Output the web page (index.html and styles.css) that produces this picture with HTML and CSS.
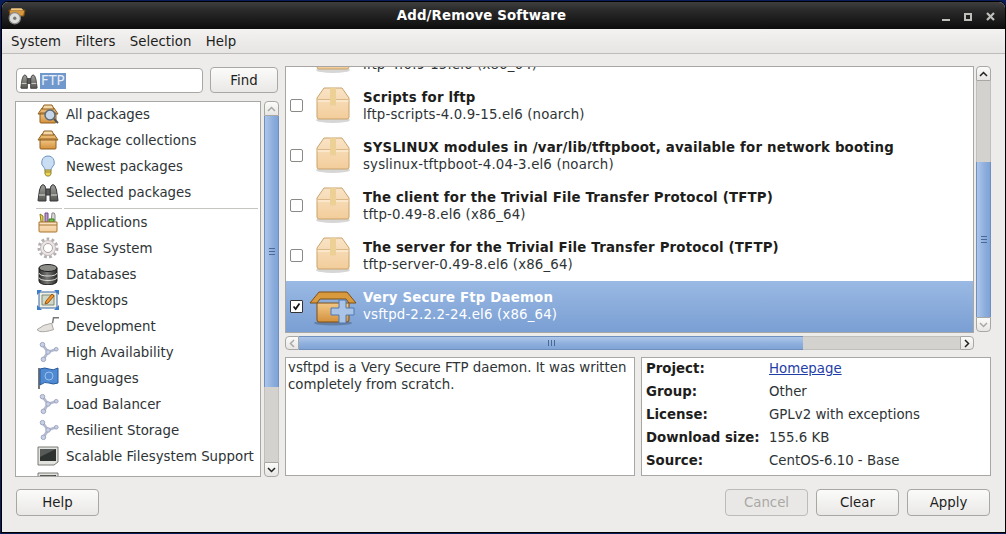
FILE: index.html
```html
<!DOCTYPE html>
<html lang="en">
<head>
<meta charset="utf-8">
<title>Add/Remove Software</title>
<link rel="stylesheet" href="styles.css">
</head>
<body>
<svg class="defs" width="0" height="0" aria-hidden="true">
  <defs>
    <linearGradient id="gBox" x1="0" y1="0" x2="0" y2="1"><stop offset="0" stop-color="#f9e3c6"/><stop offset="1" stop-color="#f3cd9a"/></linearGradient>
    <linearGradient id="gOrange" x1="0" y1="0" x2="0" y2="1"><stop offset="0" stop-color="#f2c988"/><stop offset="1" stop-color="#d4913c"/></linearGradient>
    <linearGradient id="gGrey" x1="0" y1="0" x2="0" y2="1"><stop offset="0" stop-color="#a3a39f"/><stop offset="1" stop-color="#55554f"/></linearGradient>
    <linearGradient id="gDb" x1="0" y1="0" x2="1" y2="0"><stop offset="0" stop-color="#2f2f2f"/><stop offset=".45" stop-color="#7a7a78"/><stop offset="1" stop-color="#2a2a2a"/></linearGradient>
    <symbol id="pkg" viewBox="0 0 36 38">
      <ellipse cx="18" cy="34" rx="17" ry="3" fill="#000" opacity=".16"/>
      <path d="M9 2h18l7 10v19q0 2-2 2H4q-2 0-2-2V12z" fill="url(#gBox)" stroke="#c9a36b"/>
      <path d="M2.500 13.500h31" stroke="#d9b98a" fill="none"/>
      <path d="M2.500 15h31" stroke="#fff3e0" fill="none"/>
      <path d="M15 2h6v18l-1.500-1-1.500 1-1.500-1-1.500 1z" fill="#ecd096"/>
    </symbol>
    <symbol id="pkgadd" viewBox="0 0 48 38">
      <ellipse cx="24" cy="35" rx="19" ry="2.500" fill="#000" opacity=".22"/>
      <path d="M1 15 10 4h28l9 11h-7l-3-4H11l-3 4z" fill="#d99a3e" stroke="#7e4f14"/>
      <path d="M8 15h32v17q0 2-2 2H10q-2 0-2-2z" fill="url(#gOrange)" stroke="#7e4f14"/>
      <path d="M30 12h7v8h8v7h-8v8h-7v-8h-8v-7h8z" fill="#a9c4e6" stroke="#4f79b3"/>
    </symbol>
    <symbol id="box" viewBox="0 0 22 22">
      <path d="M1 11 5 5h12l4 6" fill="#e9b66e" stroke="#8f5f1e"/>
      <path d="M7 2h8l2 4H5z" fill="#f3d8a8" stroke="#8f5f1e"/>
      <path d="M3 10h16v9q0 1-1 1H4q-1 0-1-1z" fill="url(#gOrange)" stroke="#8f5f1e"/>
      <path d="M1 11h20" stroke="#8f5f1e" fill="none"/>
    </symbol>
    <symbol id="boxlens" viewBox="0 0 22 22">
      <use href="#box"/>
      <circle cx="13" cy="12" r="5" fill="#c5d6e8" stroke="#5d6a75" stroke-width="1.500"/>
      <path d="m17 16 4 4" stroke="#4c5258" stroke-width="2" fill="none"/>
    </symbol>
    <symbol id="bulb" viewBox="0 0 22 22">
      <path d="M11 1a6.500 6.500 0 0 0-4 11.500q1 1 1 3h6q0-2 1-3A6.500 6.500 0 0 0 11 1z" fill="#c9def2" stroke="#6d94c4"/>
      <path d="M8 15h6v4l-1.500 2h-3L8 19z" fill="#ecd75c" stroke="#94812a"/>
      <path d="M8 17h6" stroke="#94812a" fill="none"/>
    </symbol>
    <symbol id="binoc" viewBox="0 0 22 22">
      <path d="M1 19.500 2.500 9 4 5q2-3 4 0l1 4v11H2q-1 0-1-.5zM21 19.500 19.500 9 18 5q-2-3-4 0l-1 4v11h7q1 0 1-.5z" fill="url(#gGrey)" stroke="#38383a"/>
      <path d="M9 8h4v6H9z" fill="#5a5a58" stroke="#38383a"/>
      <path d="M2 14h6M14 14h6" stroke="#deded9" fill="none"/>
    </symbol>
    <symbol id="apps" viewBox="0 0 22 22">
      <path d="M3 3l3 2v6H4z" fill="#e8d24f" stroke="#8f7e1e"/>
      <path d="M8 2h3v9H8z" fill="#b99ac8" stroke="#6c4a80"/>
      <path d="M15 2q3-1 3 2v7h-4z" fill="#d8d8d4" stroke="#8a8a86"/>
      <path d="M12 8h5v3h-5z" fill="#6fc24a" stroke="#3d7f22"/>
      <path d="M2 11h18v9q0 1-1 1H3q-1 0-1-1z" fill="url(#gBox)" stroke="#a8752e"/>
      <path d="M2 14h18" stroke="#a8752e" fill="none"/>
    </symbol>
    <symbol id="gear" viewBox="0 0 22 22">
      <circle cx="11" cy="11" r="8.500" fill="none" stroke="#b5b0b0" stroke-width="4" stroke-dasharray="2.600 2.200"/>
      <circle cx="11" cy="11" r="7.500" fill="#ece5e5" stroke="#c6bfc0"/>
      <circle cx="11" cy="11" r="4.500" fill="#fff" stroke="#b0a4a6"/>
    </symbol>
    <symbol id="db" viewBox="0 0 22 22">
      <path d="M2 5v13c0 5 18 5 18 0V5z" fill="url(#gDb)" stroke="#1e1e1e"/>
      <ellipse cx="11" cy="5" rx="9" ry="3.500" fill="#8d8d8a" stroke="#1e1e1e"/>
      <path d="M2 10c0 4 18 4 18 0M2 14.500c0 4 18 4 18 0" fill="none" stroke="#dcdcd8"/>
    </symbol>
    <symbol id="desk" viewBox="0 0 22 22">
      <path d="M2 3h18v16H2z" fill="#eef0e6" stroke="#35659f"/>
      <path d="M5 6h12v10H5z" fill="#cfd8c8" stroke="#7c8a78"/>
      <path d="m15 5-6 7-1 3 3-1 6-7z" fill="#ee9530" stroke="#a2560f"/>
      <path d="M0 1h5L0 6zM22 1h-5l5 5zM0 21h5l-5-5zM22 21h-5l5-5z" fill="#3b7ccc"/>
    </symbol>
    <symbol id="trowel" viewBox="0 0 24 22">
      <path d="M0 15Q7 9 16 8l2 7q-10 3-15 2z" fill="#e4e1dc" stroke="#a3a19c"/>
      <path d="m17 8 1-6h6" fill="none" stroke="#777" stroke-width="1.600"/>
    </symbol>
    <symbol id="net" viewBox="0 0 22 24">
      <path d="M5 4 11 12 20 9M11 12 6 20" fill="none" stroke="#b4b9d0" stroke-width="3"/>
      <circle cx="5" cy="4" r="2.500" fill="#c8d0e4" stroke="#98a0bc"/>
      <circle cx="11" cy="12" r="2.500" fill="#c8d0e4" stroke="#98a0bc"/>
      <circle cx="20" cy="9" r="2" fill="#c8d0e4" stroke="#98a0bc"/>
      <circle cx="6" cy="20" r="2.500" fill="#c8d0e4" stroke="#98a0bc"/>
    </symbol>
    <symbol id="flag" viewBox="0 0 22 22">
      <path d="M1 1h2v21H1z" fill="#777"/>
      <path d="M3 2q5-2 9 0t9-1v15q-5 2-9 0t-9 2z" fill="#4f8ad2" stroke="#245a9e"/>
      <circle cx="12" cy="9" r="4" fill="none" stroke="#9cc2ec"/>
    </symbol>
    <symbol id="screen" viewBox="0 0 22 22">
      <path d="M1 2h20v15l-4 3H1z" fill="#e2e2de" stroke="#7a7a76"/>
      <path d="M3 4h16v12H3z" fill="#2e3230"/>
      <path d="M3 4h16L3 12z" fill="#565a58"/>
    </symbol>
  </defs>
</svg>

<div class="window">
  <header class="titlebar">
    <svg class="title-icon" viewBox="0 0 16 16"><path d="M1 3h14l-1 5H2z" fill="#d9963a" stroke="#7e4f14"/><path d="M3 1h9l2 2H2z" fill="#f0c77e"/><circle cx="6" cy="10" r="5" fill="#dcdcd8" stroke="#888"/><circle cx="6" cy="10" r="1.500" fill="#777"/></svg>
    <h1 class="title">Add/Remove Software</h1>
    <div class="win-controls">
      <span class="wc-min"></span>
      <span class="wc-max"></span>
      <svg class="wc-close" viewBox="0 0 9 9"><path d="m1 1 7 7M8 1 1 8" stroke="#bfbfbb" stroke-width="2.200" fill="none"/></svg>
    </div>
  </header>
  <nav class="menubar">
    <span>System</span><span>Filters</span><span>Selection</span><span>Help</span>
  </nav>
  <main class="content">
    <div class="panes">
      <aside class="left">
        <div class="search">
          <div class="entry">
            <svg class="entry-icon"><use href="#binoc"/></svg>
            <span class="sel-text">FTP</span>
          </div>
          <button class="btn find">Find</button>
        </div>
        <div class="groups">
          <div class="frame group-list">
            <div class="grow"><svg class="gicon"><use href="#boxlens"/></svg><span>All packages</span></div>
            <div class="grow"><svg class="gicon"><use href="#box"/></svg><span>Package collections</span></div>
            <div class="grow"><svg class="gicon"><use href="#bulb"/></svg><span>Newest packages</span></div>
            <div class="grow"><svg class="gicon"><use href="#binoc"/></svg><span>Selected packages</span></div>
            <div class="gsep"><i></i><b></b></div>
            <div class="grow"><svg class="gicon"><use href="#apps"/></svg><span>Applications</span></div>
            <div class="grow"><svg class="gicon"><use href="#gear"/></svg><span>Base System</span></div>
            <div class="grow"><svg class="gicon"><use href="#db"/></svg><span>Databases</span></div>
            <div class="grow"><svg class="gicon"><use href="#desk"/></svg><span>Desktops</span></div>
            <div class="grow"><svg class="gicon"><use href="#trowel"/></svg><span>Development</span></div>
            <div class="grow"><svg class="gicon"><use href="#net"/></svg><span>High Availability</span></div>
            <div class="grow"><svg class="gicon"><use href="#flag"/></svg><span>Languages</span></div>
            <div class="grow"><svg class="gicon"><use href="#net"/></svg><span>Load Balancer</span></div>
            <div class="grow"><svg class="gicon"><use href="#net"/></svg><span>Resilient Storage</span></div>
            <div class="grow"><svg class="gicon"><use href="#screen"/></svg><span>Scalable Filesystem Support</span></div>
            <div class="grow"><svg class="gicon"><use href="#screen"/></svg><span></span></div>
          </div>
          <div class="vscroll vs-left">
            <div class="sb-btn up"><svg viewBox="0 0 9 6"><path d="M1 5 4.500 1.500 8 5" fill="none" stroke="#a9a8a6" stroke-width="1.500"/></svg></div>
            <div class="thumb-v thumb-left"><span class="grip-v"></span></div>
            <div class="trough"></div>
            <div class="sb-btn down"><svg viewBox="0 0 9 6"><path d="M1 1 4.500 4.500 8 1" fill="none" stroke="#222" stroke-width="1.500"/></svg></div>
          </div>
        </div>
      </aside>

      <section class="right">
        <div class="top-area">
          <div class="list-col">
            <div class="frame pkg-list">
              <div class="prow cut">
                <span class="cb hidden"></span>
                <svg class="picon"><use href="#pkg"/></svg>
                <div class="ptext"><strong class="blank"></strong><span>lftp-4.0.9-15.el6 (x86_64)</span></div>
              </div>
              <div class="prow">
                <span class="cb"></span>
                <svg class="picon"><use href="#pkg"/></svg>
                <div class="ptext"><strong>Scripts for lftp</strong><span>lftp-scripts-4.0.9-15.el6 (noarch)</span></div>
              </div>
              <div class="prow">
                <span class="cb"></span>
                <svg class="picon"><use href="#pkg"/></svg>
                <div class="ptext"><strong>SYSLINUX modules in /var/lib/tftpboot, available for network booting</strong><span>syslinux-tftpboot-4.04-3.el6 (noarch)</span></div>
              </div>
              <div class="prow">
                <span class="cb"></span>
                <svg class="picon"><use href="#pkg"/></svg>
                <div class="ptext"><strong>The client for the Trivial File Transfer Protocol (TFTP)</strong><span>tftp-0.49-8.el6 (x86_64)</span></div>
              </div>
              <div class="prow">
                <span class="cb"></span>
                <svg class="picon"><use href="#pkg"/></svg>
                <div class="ptext"><strong>The server for the Trivial File Transfer Protocol (TFTP)</strong><span>tftp-server-0.49-8.el6 (x86_64)</span></div>
              </div>
              <div class="prow selected">
                <span class="cb checked"><svg viewBox="0 0 13 13"><path d="m3 6.500 2.500 3L10 3" fill="none" stroke="#111" stroke-width="2"/></svg></span>
                <svg class="picon add"><use href="#pkgadd"/></svg>
                <div class="ptext"><strong>Very Secure Ftp Daemon</strong><span>vsftpd-2.2.2-24.el6 (x86_64)</span></div>
              </div>
            </div>
            <div class="hscroll">
              <div class="sb-btn left-btn"><svg viewBox="0 0 6 9"><path d="M5 1 1.500 4.500 5 8" fill="none" stroke="#a9a8a6" stroke-width="1.500"/></svg></div>
              <div class="thumb-h"><span class="grip-h"></span></div>
              <div class="trough"></div>
              <div class="sb-btn right-btn"><svg viewBox="0 0 6 9"><path d="M1 1 4.500 4.500 1 8" fill="none" stroke="#222" stroke-width="1.500"/></svg></div>
            </div>
          </div>
          <div class="vscroll vs-right">
            <div class="sb-btn up"><svg viewBox="0 0 9 6"><path d="M1 5 4.500 1.500 8 5" fill="none" stroke="#222" stroke-width="1.500"/></svg></div>
            <div class="trough"></div>
            <div class="thumb-v thumb-right"><span class="grip-v"></span></div>
            <div class="sb-btn down"><svg viewBox="0 0 9 6"><path d="M1 1 4.500 4.500 8 1" fill="none" stroke="#a9a8a6" stroke-width="1.500"/></svg></div>
          </div>
        </div>
        <div class="info">
          <div class="frame desc">vsftpd is a Very Secure FTP daemon. It was written completely from scratch.</div>
          <dl class="frame details">
            <dt>Project:</dt><dd><a class="link">Homepage</a></dd>
            <dt>Group:</dt><dd>Other</dd>
            <dt>License:</dt><dd>GPLv2 with exceptions</dd>
            <dt>Download size:</dt><dd>155.6 KB</dd>
            <dt>Source:</dt><dd>CentOS-6.10 - Base</dd>
          </dl>
        </div>
      </section>
    </div>
    <footer class="actions">
      <button class="btn wide">Help</button>
      <div class="actions-right">
        <button class="btn wide disabled">Cancel</button>
        <button class="btn wide">Clear</button>
        <button class="btn wide">Apply</button>
      </div>
    </footer>
  </main>
</div>
</body>
</html>
```

FILE: styles.css
```css
* { box-sizing: border-box; }
html, body { margin: 0; height: 100%; }
body {
  width: 1006px;
  height: 534px;
  overflow: hidden;
  padding: 2px 1px 2px 2px;
  background: #0b1d58;
  font: 13.33px/17px "DejaVu Sans", sans-serif;
  color: #2e3436;
}
.defs { position: absolute; }
.window {
  height: 530px;
  display: flex;
  flex-direction: column;
  background: #edeceb;
  border-radius: 6px 6px 0 0;
  overflow: hidden;
  box-shadow: 0 0 0 1px #000;
}
.titlebar {
  flex: none;
  height: 27px;
  display: flex;
  align-items: center;
  justify-content: center;
  position: relative;
  background: linear-gradient(#3f3f3f, #2a2a2a 30%, #0d0d0d);
}
.title-icon { position: absolute; left: 6px; top: 5px; width: 18px; height: 18px; }
.title {
  margin: 0 0 0 -44px;
  font: bold 13.33px/17px "DejaVu Sans", sans-serif;
  color: #fff;
  letter-spacing: .14px;
}
.win-controls {
  position: absolute;
  right: 10px;
  top: 9px;
  display: flex;
  align-items: flex-end;
  gap: 14px;
  height: 10px;
}
.wc-min { width: 8px; height: 2px; background: #bfbfbb; }
.wc-max { width: 8px; height: 8px; border: 2px solid #bfbfbb; }
.wc-close { width: 9px; height: 9px; }
.menubar {
  flex: none;
  height: 25px;
  display: flex;
  align-items: center;
  gap: 14.2px;
  padding-left: 9px;
  background: linear-gradient(#f3f2f1, #e6e5e3);
  border-bottom: 1px solid #bdbcb9;
  color: #1d1d1b;
  letter-spacing: .05px;
}
.content {
  flex: 1;
  display: flex;
  flex-direction: column;
  padding: 13px 14px 14px 13px;
  min-height: 0;
}
.panes { display: flex; gap: 6px; height: 410px; }
.left { width: 264px; display: flex; flex-direction: column; gap: 7px; }
.search { display: flex; gap: 7px; height: 27px; padding: 1px 1px 0 0; }
.entry {
  flex: 1;
  margin-left: 1px;
  height: 25px;
  display: flex;
  align-items: center;
  gap: 2px;
  padding-left: 3px;
  background: #fff;
  border: 1px solid #a8a7a4;
  border-radius: 4px;
}
.entry-icon { width: 18px; height: 18px; }
.sel-text { background: #7098cd; color: #e6edf7; line-height: 16px; padding: 0 1px; }
.btn {
  font: 13.33px/17px "DejaVu Sans", sans-serif;
  color: #1d1d1b;
  background: linear-gradient(#fbfbfa, #e9e8e6);
  border: 1px solid #a8a7a4;
  border-radius: 4px;
  padding: 0;
}
.find { width: 68px; height: 26px; margin-top: -1px; }
.groups { flex: 1; display: flex; gap: 3px; min-height: 0; }
.frame { background: #fff; border: 1px solid #a8a7a4; }
.group-list {
  flex: 1;
  min-width: 0;
  height: 100%;
  overflow: hidden;
  padding-left: 21px;
}
.grow {
  height: 26px;
  display: flex;
  align-items: center;
  gap: 7px;
  white-space: nowrap;
  flex: none;
}
.grow:first-child { margin-top: -1px; }
.gicon { width: 22px; height: 22px; flex: none; }
.gsep { height: 4px; display: flex; gap: 2px; padding-right: 2px; margin-left: -1px; }
.gsep i { width: 26px; height: 1px; margin-top: 3px; background: #c6c5c2; }
.gsep b { flex: 1; height: 1px; margin-top: 3px; background: #c6c5c2; }

.vscroll {
  width: 15px;
  flex: none;
  display: flex;
  flex-direction: column;
}
.vs-left { height: 100%; }
.sb-btn {
  flex: none;
  display: flex;
  align-items: center;
  justify-content: center;
  background: linear-gradient(#fbfbfa, #e7e6e4);
  border: 1px solid #a8a7a4;
}
.vscroll .sb-btn { height: 15px; }
.vscroll .sb-btn svg { width: 9px; height: 6px; }
.hscroll .sb-btn { width: 14px; }
.hscroll .sb-btn svg { width: 6px; height: 9px; }
.up { border-radius: 4px 4px 0 0; }
.down { border-radius: 0 0 4px 4px; }
.left-btn { border-radius: 4px 0 0 4px; }
.right-btn { border-radius: 0 4px 4px 0; }
.trough { flex: 1; background: #d3d2cf; box-shadow: inset 1px 0 #c0bfbc, inset -1px 0 #c0bfbc; }
.thumb-v {
  flex: none;
  display: flex;
  align-items: center;
  justify-content: center;
  background: linear-gradient(90deg, #adc6e8, #8fb0de 55%, #7fa3d6);
  border: 1px solid #6f8fbf;
  border-width: 0 1px;
}
.thumb-left { height: 271px; }
.thumb-right { height: 155px; }
.grip-v { width: 6px; height: 7px; border-top: 1px solid #4a6796; border-bottom: 1px solid #4a6796; position: relative; }
.grip-v::after { content: ""; position: absolute; left: 0; right: 0; top: 2px; height: 1px; background: #4a6796; }

.right { flex: 1; min-width: 0; display: flex; flex-direction: column; gap: 6px; margin-top: -1px; }
.top-area { display: flex; gap: 2px; height: 285px; }
.list-col { flex: 1; min-width: 0; display: flex; flex-direction: column; gap: 3px; }
.vs-right { height: 266px; }
.pkg-list { height: 267px; overflow: hidden; flex: none; }
.prow {
  height: 50px;
  display: flex;
  align-items: center;
  padding-left: 4px;
  flex: none;
}
.prow.cut { margin-top: -37px; }
.cb {
  width: 13px;
  height: 13px;
  flex: none;
  border: 1px solid #8a8986;
  border-radius: 2px;
  background: #fff;
  display: flex;
}
.cb.hidden { visibility: hidden; }
.cb.checked { border-color: #333; border-radius: 1px; }
.cb svg { width: 11px; height: 11px; }
.picon { width: 36px; height: 38px; flex: none; margin: 0 12px 0 12px; }
.picon.add { width: 48px; margin: 0 6px 0 6px; }
.ptext { display: flex; flex-direction: column; white-space: nowrap; line-height: 17px; color: #2e3436; padding-top: 2px; letter-spacing: .16px; }
.ptext strong { font-weight: bold; color: #1d1d1b; letter-spacing: .18px; }
.ptext .blank { height: 17px; }
.selected {
  height: 51px;
  margin-top: 1px;
  background: linear-gradient(#9ab9e4, #7a9fd3);
}
.selected .ptext { padding: 0 0 2px; }
.selected .ptext, .selected .ptext strong { color: #fff; }
.hscroll { height: 14px; display: flex; flex: none; }
.thumb-h {
  width: 504px;
  flex: none;
  display: flex;
  align-items: center;
  justify-content: center;
  background: linear-gradient(#adc6e8, #8fb0de 55%, #7fa3d6);
  border: 1px solid #6f8fbf;
  border-width: 1px 0;
}
.grip-h { width: 7px; height: 6px; border-left: 1px solid #4a6796; border-right: 1px solid #4a6796; position: relative; }
.grip-h::after { content: ""; position: absolute; top: 0; bottom: 0; left: 2px; width: 1px; background: #4a6796; }
.hscroll .trough { box-shadow: inset 0 1px #c0bfbc, inset 0 -1px #c0bfbc; }

.info { display: flex; gap: 6px; height: 119px; }
.desc { width: 350px; flex: none; padding: 1px 2px; }
.details {
  flex: 1;
  margin: 0;
  padding: 0 4px;
  display: grid;
  grid-template-columns: 123px 1fr;
  grid-auto-rows: 23px;
  align-items: center;
}
.details dt { font-weight: bold; color: #1d1d1b; margin-bottom: 2px; }
.details dd { margin: 0 0 2px; }
.link { color: #1f3ea8; text-decoration: underline; }

.actions {
  display: flex;
  justify-content: space-between;
  margin: 12px 1px 0 1px;
  height: 28px;
}
.actions-right { display: flex; gap: 8px; }
.wide { width: 83px; height: 27px; }
.disabled { color: #a9a8a5; background: #e9e8e6; border-color: #bcbbb8; }
```
